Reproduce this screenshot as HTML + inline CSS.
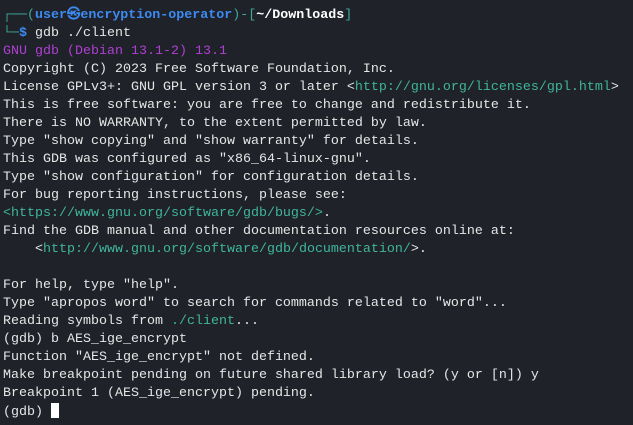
<!DOCTYPE html>
<html><head><meta charset="utf-8"><style>
html,body{margin:0;padding:0;width:633px;height:425px;overflow:hidden;background:#1f2229;}
pre{margin:0;padding:7px 0 0 3px;font-family:"Liberation Mono","DejaVu Sans Mono",monospace;font-size:13.33px;line-height:18px;color:#e6e6e6;white-space:pre;}
.g{color:#3fa89b}.b{color:#3d8bf2;font-weight:bold}.w{color:#fff;font-weight:bold}.p{color:#b03fd3}.l{color:#3fb59c}
.c{display:inline-block;width:8px;height:15px;background:#fff;vertical-align:-3px}
</style></head><body>
<pre><span class="g">┌──(</span><span class="b">user㉿encryption-operator</span><span class="g">)-[</span><span class="w">~/Downloads</span><span class="g">]</span>
<span class="g">└─</span><span class="b">$</span> gdb ./client
<span class="p">GNU gdb (Debian 13.1-2) 13.1</span>
Copyright (C) 2023 Free Software Foundation, Inc.
License GPLv3+: GNU GPL version 3 or later &lt;<span class="l">http://gnu.org/licenses/gpl.html</span>&gt;
This is free software: you are free to change and redistribute it.
There is NO WARRANTY, to the extent permitted by law.
Type "show copying" and "show warranty" for details.
This GDB was configured as "x86_64-linux-gnu".
Type "show configuration" for configuration details.
For bug reporting instructions, please see:
<span class="l">&lt;https://www.gnu.org/software/gdb/bugs/&gt;</span>.
Find the GDB manual and other documentation resources online at:
    &lt;<span class="l">http://www.gnu.org/software/gdb/documentation/</span>&gt;.

For help, type "help".
Type "apropos word" to search for commands related to "word"...
Reading symbols from <span class="l">./client</span>...
(gdb) b AES_ige_encrypt
Function "AES_ige_encrypt" not defined.
Make breakpoint pending on future shared library load? (y or [n]) y
Breakpoint 1 (AES_ige_encrypt) pending.
(gdb) <span class="c"></span></pre>
</body></html>
